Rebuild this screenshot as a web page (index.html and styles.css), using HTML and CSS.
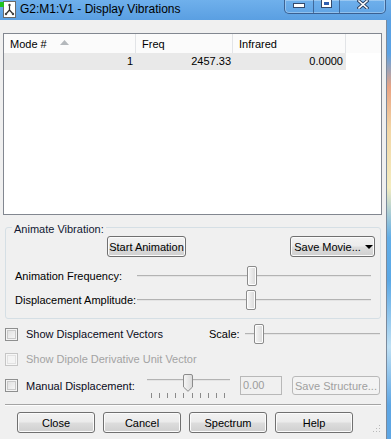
FILE: index.html
```html
<!DOCTYPE html>
<html>
<head>
<meta charset="utf-8">
<link rel="stylesheet" href="styles.css">
</head>
<body>
<div class="window">
  <div class="titlebar">
    <svg class="appicon" width="17" height="19" viewBox="0 0 17 19">
      <rect x="3.5" y="1.5" width="12" height="16" fill="#fff" stroke="#6a6a6a"/>
      <rect x="0" y="2" width="4" height="5" fill="#1ec21e"/>
      <path d="M9.5 5 V10 M9.5 10 L6 14 M9.5 10 L13 14" stroke="#333" stroke-width="1.2" fill="none"/>
      <circle cx="9.5" cy="5" r="1.2" fill="#444"/>
      <circle cx="6" cy="14" r="1.2" fill="#444"/>
      <circle cx="13" cy="14" r="1.2" fill="#444"/>
    </svg>
    <span class="title">G2:M1:V1 - Display Vibrations</span>
    <div class="caption">
      <div class="cbtn cmin"><span class="gmin"></span></div>
      <div class="cbtn cmax"><span class="gmax"></span></div>
      <div class="cbtn cclose">
        <svg width="12" height="9" viewBox="0 0 12 9">
          <path d="M2 1 L10 8 M10 1 L2 8" stroke="#2b3f5e" stroke-width="3.4" stroke-linecap="square"/>
          <path d="M2 1 L10 8 M10 1 L2 8" stroke="#fff" stroke-width="1.6" stroke-linecap="square"/>
        </svg>
      </div>
    </div>
  </div>
  <div class="main">
    <div class="client">
      <div class="listview">
        <div class="lv-head">
          <div class="th">Mode #<svg class="sort" width="9" height="5" viewBox="0 0 9 5"><path d="M0 5 L4.5 0 L9 5 Z" fill="#b4b8bc"/></svg></div>
          <div class="th">Freq</div>
          <div class="th">Infrared</div>
          <div class="th"></div>
        </div>
        <div class="lv-row">
          <div class="td c1">1</div>
          <div class="td c2">2457.33</div>
          <div class="td c3">0.0000</div>
          <div class="td c4"></div>
        </div>
      </div>

      <div class="group">
        <div class="legend">Animate Vibration:</div>
        <div class="btnrow">
          <div class="btn start">Start Animation</div>
          <div class="btn savemovie">Save Movie...<span class="dd"></span></div>
        </div>
        <div class="srow r1">
          <div class="lbl">Animation Frequency:</div>
          <div class="slider"><div class="track"></div><div class="thumb" style="left:110px"></div></div>
        </div>
        <div class="srow r2">
          <div class="lbl">Displacement Amplitude:</div>
          <div class="slider"><div class="track"></div><div class="thumb" style="left:109px"></div></div>
        </div>
      </div>

      <div class="crow cr1">
        <div class="cbox"></div>
        <div class="clabel wide">Show Displacement Vectors</div>
        <div class="scale">Scale:</div>
        <div class="slider sslider"><div class="track"></div><div class="thumb" style="left:9px"></div></div>
      </div>
      <div class="crow cr2 disabled">
        <div class="cbox dis"></div>
        <div class="clabel">Show Dipole Derivative Unit Vector</div>
      </div>
      <div class="crow cr3">
        <div class="cbox"></div>
        <div class="clabel mlabel">Manual Displacement:</div>
        <div class="mslider">
          <div class="mtrack"></div>
          <div class="ticks"><i></i><i></i><i></i><i></i><i></i><i></i><i></i><i></i><i></i><i></i></div>
          <svg class="pthumb" style="left:37px" width="10" height="18" viewBox="0 0 10 18">
            <defs><linearGradient id="tg" x1="0" x2="1" y1="0" y2="0"><stop offset="0" stop-color="#f6f6f6"/><stop offset="1" stop-color="#d9d9d9"/></linearGradient></defs>
            <path d="M0.5 2 Q0.5 0.5 2 0.5 H8 Q9.5 0.5 9.5 2 V13 L5 17.3 L0.5 13 Z" fill="url(#tg)" stroke="#8b8b8b"/>
          </svg>
        </div>
        <div class="tbox">0.00</div>
        <div class="btn sstruct">Save Structure...</div>
      </div>

      <div class="sep"></div>

      <div class="bottom">
        <div class="btn bb">Close</div>
        <div class="btn bb">Cancel</div>
        <div class="btn bb">Spectrum</div>
        <div class="btn bb">Help</div>
        <svg class="grip" width="10" height="10" viewBox="0 0 10 10">
          <g fill="#b9b9b9">
            <rect x="8" y="2" width="1" height="1"/>
            <rect x="5" y="5" width="1" height="1"/><rect x="8" y="5" width="1" height="1"/>
            <rect x="2" y="8" width="1" height="1"/><rect x="5" y="8" width="1" height="1"/><rect x="8" y="8" width="1" height="1"/>
          </g>
        </svg>
      </div>
    </div>
    <div class="edge"></div>
  </div>
</div>
</body>
</html>
```
FILE: styles.css
```css
* { box-sizing: border-box; }
html, body { margin: 0; padding: 0; }
body {
  width: 391px;
  height: 439px;
  overflow: hidden;
  font-family: "Liberation Sans", Arial, sans-serif;
  font-size: 11px;
  color: #000;
  background: #f0f0f0;
}
.window { width: 391px; height: 439px; display: flex; flex-direction: column; }

/* title bar */
.titlebar {
  height: 20px;
  flex: none;
  display: flex;
  align-items: flex-start;
  background: linear-gradient(#6fb0ec, #5a9fe2);
}
.appicon { flex: none; margin-top: 0; }
.title { margin-left: 3px; font-size: 12px; line-height: 18px; color: #000; white-space: nowrap; }
.caption {
  margin-left: auto;
  margin-right: 5px;
  display: flex;
  height: 14px;
  border: 1px solid rgba(30, 50, 90, 0.6);
  border-top: none;
  border-radius: 0 0 5px 5px;
  box-shadow: inset 0 0 0 1px rgba(255, 255, 255, 0.3);
}
.cbtn { display: flex; justify-content: center; align-items: flex-start; }
.cbtn + .cbtn { border-left: 1px solid rgba(30, 50, 90, 0.55); }
.cmin { width: 28px; }
.cmax { width: 26px; }
.cclose { width: 46px; }
.gmin {
  margin-top: 3px;
  width: 12px; height: 5px;
  background: #fff;
  border: 1px solid #34496b;
}
.gmax {
  margin-top: 0;
  width: 11px; height: 8px;
  border: 1px solid #34496b;
  border-top: none;
  box-shadow: inset 0 0 0 2px #fff;
  background: #2f5fb0;
}

/* main area */
.main { flex: 1; display: flex; }
.client { width: 386px; display: flex; flex-direction: column; align-items: flex-start; }
.edge {
  width: 5px;
  border-left: 1px solid #7b8a9c;
  background: linear-gradient(#5ba2e4 0%, #5ba2e4 8%, #e9a383 16%, #f2d6a6 26%, #f3ecc0 40%, #62aee8 52%, #5aa8e6 62%, #bfe0f4 78%, #5ea6e4 92%, #5ea6e4 100%);
}

/* list view */
.listview {
  margin: 13px 0 0 3px;
  width: 379px;
  height: 182px;
  flex: none;
  border: 1px solid #828790;
  background: #fff;
}
.lv-head, .lv-row { display: grid; grid-template-columns: 132px 97px 113px 1fr; }
.lv-head { height: 19px; background: #fbfbfb; }
.th {
  display: flex;
  align-items: center;
  padding-left: 6px;
  border-right: 1px solid #e2e4e7;
  white-space: nowrap;
}
.th:last-child { border-right: none; }
.sort { margin-left: 13px; margin-top: -2px; }
.lv-row { height: 17px; }
.td { line-height: 17px; text-align: right; background: #e9e9e9; }
.td.c1 { padding-right: 3px; }
.td.c2 { padding-right: 2px; }
.td.c3 { padding-right: 3px; }
.td.c4 { background: #fff; }

/* group box */
.group {
  margin: 12px 0 0 5px;
  width: 376px;
  height: 92px;
  flex: none;
  border: 1px solid #d5dfe5;
  border-radius: 3px;
}
.legend {
  width: max-content;
  margin: -6px 0 0 6px;
  padding: 0 2px;
  line-height: 14px;
  height: 14px;
  background: #f0f0f0;
  color: #111833;
}
.btnrow { display: flex; height: 21px; }

.btn {
  height: 21px;
  border: 1px solid #707070;
  border-radius: 3px;
  background: linear-gradient(#f2f2f2 0%, #ebebeb 48%, #dddddd 52%, #cfcfcf 100%);
  box-shadow: inset 0 0 0 1px #fbfbfb;
  display: flex;
  align-items: center;
  justify-content: center;
  white-space: nowrap;
  flex: none;
}
.start { margin-left: 101px; width: 79px; }
.savemovie { margin-left: auto; margin-right: 5px; width: 85px; padding-left: 2px; }
.dd {
  margin-left: 4px;
  width: 0; height: 0;
  border-left: 4px solid transparent;
  border-right: 4px solid transparent;
  border-top: 4px solid #000;
}

.srow { display: grid; grid-template-columns: 131px 234px; height: 20px; align-items: center; }
.srow .lbl { padding-left: 9px; white-space: nowrap; }
.r1 { margin-top: 9px; }
.r2 { margin-top: 4px; }

.slider { position: relative; height: 20px; display: flex; align-items: center; }
.track {
  flex: 1;
  height: 2px;
  border-top: 1px solid #b3b3b3;
  border-bottom: 1px solid #e4e4e4;
}
.thumb {
  position: absolute;
  top: 0;
  width: 10px;
  height: 20px;
  border: 1px solid #8b8b8b;
  border-radius: 2px;
  background: linear-gradient(90deg, #f6f6f6, #d9d9d9);
  box-shadow: inset 0 0 0 1px #fdfdfd;
}

/* checkbox rows */
.crow { display: flex; align-items: center; height: 20px; padding-left: 5px; flex: none; width: 386px; }
.cr1 { margin-top: 5px; }
.cr2 { margin-top: 5px; }
.cr3 { margin-top: 7px; height: 19px; }
.cbox {
  width: 13px; height: 13px;
  flex: none;
  border: 1px solid #8e8f8f;
  background: linear-gradient(135deg, #dcdcdc, #fbfbfb);
  box-shadow: inset 0 0 0 1px #f4f4f4, inset 0 0 0 2px #c9c9c9;
}
.cbox.dis {
  border-color: #c6c6c6;
  background: #f4f4f4;
  box-shadow: inset 0 0 0 1px #f7f7f7, inset 0 0 0 2px #e2e2e2;
}
.clabel { margin-left: 8px; white-space: nowrap; color: #0a0a20; }
.disabled .clabel { color: #a3a3a3; }
.clabel.wide { width: 183px; }
.scale { width: 36px; }
.sslider { width: 135px; }

.mlabel { width: 120px; }
.mslider {
  position: relative;
  width: 84px;
  height: 25px;
  align-self: flex-start;
  margin-top: -2px;
  display: flex;
  flex-direction: column;
}
.mtrack {
  margin: 5px 0 0 1px;
  height: 2px;
  border-top: 1px solid #b3b3b3;
  border-bottom: 1px solid #e4e4e4;
}
.ticks {
  margin: 12px 0 0 5px;
  width: 74px;
  height: 5px;
  display: flex;
  justify-content: space-between;
}
.ticks i { width: 1px; height: 5px; background: #8a8a8a; }
.pthumb { position: absolute; top: 0; }

.tbox {
  margin-left: 10px;
  width: 42px;
  height: 19px;
  flex: none;
  border: 1px solid #b8b8b8;
  padding-left: 2px;
  line-height: 17px;
  color: #9c9c9c;
  background: #f0f0f0;
}
.btn.sstruct {
  margin-left: 10px;
  width: 88px;
  height: 19px;
  border-color: #b9b9b9;
  background: #f3f3f3;
  box-shadow: none;
  color: #a0a0a0;
}

.sep {
  margin: 9px 0 0 5px;
  width: 376px;
  height: 2px;
  flex: none;
  border-top: 1px solid #a4a4a4;
  border-bottom: 1px solid #fdfdfd;
}

.bottom {
  display: flex;
  gap: 8px;
  margin-top: 6px;
  padding-left: 17px;
  width: 386px;
  height: 21px;
  flex: none;
}
.bb { width: 78px; }
.grip { margin-left: auto; margin-right: 5px; align-self: flex-end; }
```
